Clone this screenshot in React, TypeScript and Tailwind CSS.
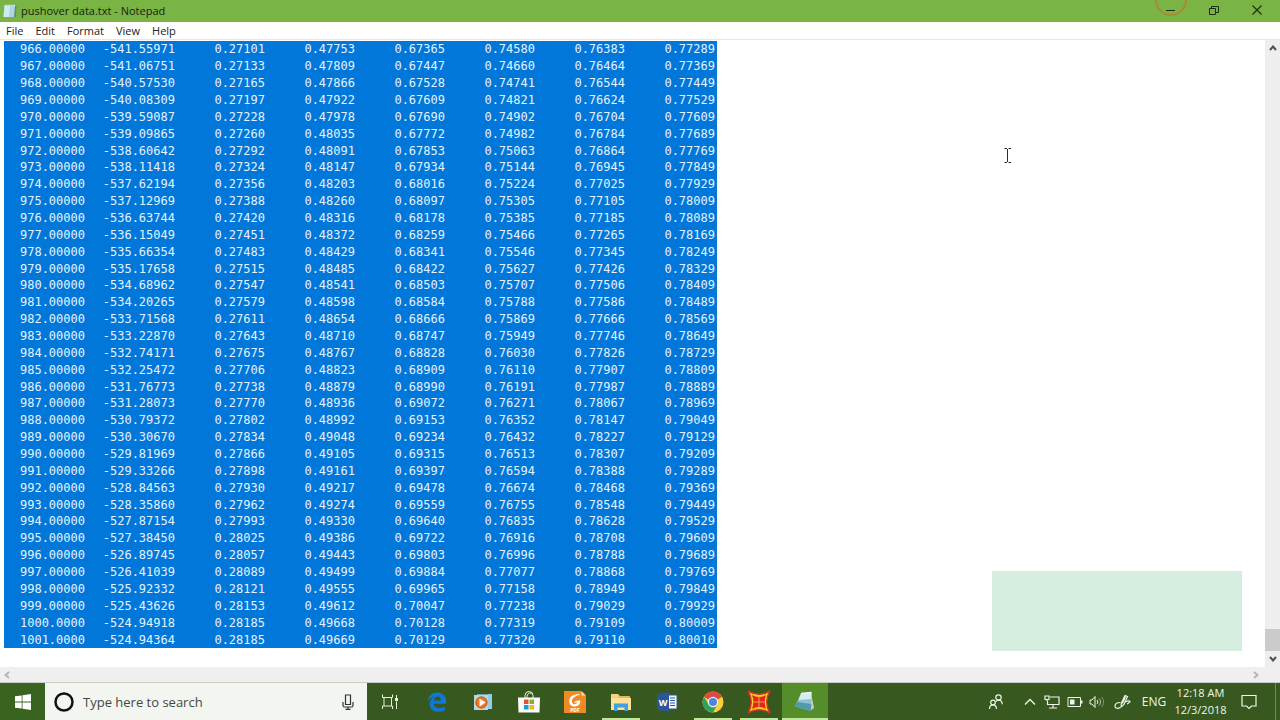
import React from 'react';

const DATA = `
966.00000 -541.55971 0.27101 0.47753 0.67365 0.74580 0.76383 0.77289
967.00000 -541.06751 0.27133 0.47809 0.67447 0.74660 0.76464 0.77369
968.00000 -540.57530 0.27165 0.47866 0.67528 0.74741 0.76544 0.77449
969.00000 -540.08309 0.27197 0.47922 0.67609 0.74821 0.76624 0.77529
970.00000 -539.59087 0.27228 0.47978 0.67690 0.74902 0.76704 0.77609
971.00000 -539.09865 0.27260 0.48035 0.67772 0.74982 0.76784 0.77689
972.00000 -538.60642 0.27292 0.48091 0.67853 0.75063 0.76864 0.77769
973.00000 -538.11418 0.27324 0.48147 0.67934 0.75144 0.76945 0.77849
974.00000 -537.62194 0.27356 0.48203 0.68016 0.75224 0.77025 0.77929
975.00000 -537.12969 0.27388 0.48260 0.68097 0.75305 0.77105 0.78009
976.00000 -536.63744 0.27420 0.48316 0.68178 0.75385 0.77185 0.78089
977.00000 -536.15049 0.27451 0.48372 0.68259 0.75466 0.77265 0.78169
978.00000 -535.66354 0.27483 0.48429 0.68341 0.75546 0.77345 0.78249
979.00000 -535.17658 0.27515 0.48485 0.68422 0.75627 0.77426 0.78329
980.00000 -534.68962 0.27547 0.48541 0.68503 0.75707 0.77506 0.78409
981.00000 -534.20265 0.27579 0.48598 0.68584 0.75788 0.77586 0.78489
982.00000 -533.71568 0.27611 0.48654 0.68666 0.75869 0.77666 0.78569
983.00000 -533.22870 0.27643 0.48710 0.68747 0.75949 0.77746 0.78649
984.00000 -532.74171 0.27675 0.48767 0.68828 0.76030 0.77826 0.78729
985.00000 -532.25472 0.27706 0.48823 0.68909 0.76110 0.77907 0.78809
986.00000 -531.76773 0.27738 0.48879 0.68990 0.76191 0.77987 0.78889
987.00000 -531.28073 0.27770 0.48936 0.69072 0.76271 0.78067 0.78969
988.00000 -530.79372 0.27802 0.48992 0.69153 0.76352 0.78147 0.79049
989.00000 -530.30670 0.27834 0.49048 0.69234 0.76432 0.78227 0.79129
990.00000 -529.81969 0.27866 0.49105 0.69315 0.76513 0.78307 0.79209
991.00000 -529.33266 0.27898 0.49161 0.69397 0.76594 0.78388 0.79289
992.00000 -528.84563 0.27930 0.49217 0.69478 0.76674 0.78468 0.79369
993.00000 -528.35860 0.27962 0.49274 0.69559 0.76755 0.78548 0.79449
994.00000 -527.87154 0.27993 0.49330 0.69640 0.76835 0.78628 0.79529
995.00000 -527.38450 0.28025 0.49386 0.69722 0.76916 0.78708 0.79609
996.00000 -526.89745 0.28057 0.49443 0.69803 0.76996 0.78788 0.79689
997.00000 -526.41039 0.28089 0.49499 0.69884 0.77077 0.78868 0.79769
998.00000 -525.92332 0.28121 0.49555 0.69965 0.77158 0.78949 0.79849
999.00000 -525.43626 0.28153 0.49612 0.70047 0.77238 0.79029 0.79929
1000.0000 -524.94918 0.28185 0.49668 0.70128 0.77319 0.79109 0.80009
1001.0000 -524.94364 0.28185 0.49669 0.70129 0.77320 0.79110 0.80010
`;

const rows = DATA.trim().split('\n').map((line) => line.split(' '));

const menus = ['File', 'Edit', 'Format', 'View', 'Help'];

function NotepadIcon() {
  return (
    <svg viewBox="0 0 22 22" className="h-[22px] w-[22px]" aria-hidden="true">
      <path d="m17 2 3 15-4 3z" fill="#c9cfc4" />
      <path d="M7 2.500 17.500 1.500 17 20 1 15.500z" fill="#8dc3cf" />
      <path d="M7 2.500 17.500 1.500 17.300 8 4.500 9z" fill="#d6ecee" />
      <path d="M3.500 11 17.200 13 17 20 1 15.500z" fill="#4f9aac" />
      <path d="M7 2.500 17.500 1.500" stroke="#f6f6f2" strokeWidth="1.500" />
    </svg>
  );
}

function TitleNotepadIcon() {
  return (
    <svg viewBox="0 0 14 14" className="h-3.5 w-3.5" aria-hidden="true">
      <path d="M4 2h9.500L13 13H3z" fill="#6f837b" />
      <path d="M1.500 2H12l-1 11H.5z" fill="#a9d8e2" />
      <path d="M1.500 2H7l-1 11H.5z" fill="#cdebf0" />
      <path d="M1.500 1.500H12" stroke="#eef6f5" strokeWidth="1.600" strokeDasharray="1 .6" />
    </svg>
  );
}

function TaskViewIcon() {
  return (
    <svg viewBox="0 0 16 16" className="h-4 w-4" fill="none" stroke="#e8f2df" aria-hidden="true">
      <path d="M.5.500v3h10v-3M.5 15v-3h10v3M2 3.500v8.500M9.500 3.500v8.500M14.500 1v3M14.500 7.500V15" />
      <path d="M13 4h3v3h-3z" fill="#e8f2df" stroke="none" />
    </svg>
  );
}

function EdgeIcon() {
  return (
    <svg viewBox="0 0 20 20" className="h-5 w-5" aria-hidden="true">
      <path
        d="M.8 9.200C1.600 3.800 5.200.6 10.300.6c5.600 0 8.900 4 8.900 9.100v2.100H6.800c.1 2.900 2.700 4.200 5.500 4.200 2.100 0 4-.6 5.600-1.600v3.900c-1.900 1-4.100 1.500-6.500 1.500-5.300 0-8.700-3-8.700-7.600 0-3.300 1.900-6.100 5-7.400C4.500 5.400 2.300 6.900.8 9.200zM7 8.400h7c0-2.500-1.300-3.900-3.400-3.900-2 0-3.300 1.400-3.600 3.900z"
        fill="#0f78d4"
      />
    </svg>
  );
}

function MediaPlayerIcon() {
  return (
    <svg viewBox="0 0 20 18" className="h-[18px] w-5" aria-hidden="true">
      <path d="M4 1h15v15H4z" fill="#6fa6c4" />
      <path d="M15 1h4v15h-4z" fill="#8fd0e8" />
      <path d="M1 2h14v15H1z" fill="#b9d6e3" />
      <circle cx="8.500" cy="9.500" r="6" fill="#ee7b22" />
      <circle cx="8.500" cy="9.500" r="5.500" fill="none" stroke="#c9551a" />
      <path d="M6.500 5.500v8l6-4z" fill="#fff" />
    </svg>
  );
}

function StoreIcon() {
  return (
    <svg viewBox="0 0 22 22" className="h-[22px] w-[22px]" aria-hidden="true">
      <path d="M7 8V4.500a4 4 0 0 1 8 0V8M9 8V5.500a3.500 3.500 0 0 1 6-2.500" fill="none" stroke="#e9eee5" />
      <path d="M0 6.500h22l-.5 15H.5z" fill="#fafbf8" />
      <path d="M6 8.500h4.500V13H6z" fill="#e8502b" />
      <path d="M11.500 8.500H16V13h-4.500z" fill="#7cb52a" />
      <path d="M6 14h4.500v4.500H6z" fill="#1a9be0" />
      <path d="M11.500 14H16v4.500h-4.500z" fill="#f5b51b" />
    </svg>
  );
}

function FoxitIcon() {
  return (
    <svg viewBox="0 0 24 24" className="h-6 w-6" aria-hidden="true">
      <path d="M1 1h17l5 5v17H1z" fill="#f08a24" />
      <path d="M18.500 1v4.500H23z" fill="#ffd3a1" />
      <path
        d="M17.500 4.500C12 3.500 6.200 6 6.200 11.200c0 3.600 2.700 5.300 5.700 5.300 3.300 0 5.400-2.200 5.400-5.700-2.600-.6-5 .1-6.300 2.300 1.200-.5 2.100-.7 3.200-.5-.5 1.100-1.400 1.600-2.500 1.600-1.700 0-2.800-1.200-2.800-3C8.900 7.700 13 5.800 17.500 4.500z"
        fill="#fff"
      />
      <text x="12" y="22" textAnchor="middle" fontSize="5" fontWeight="700" fill="#fff" fontFamily="Open Sans, sans-serif">
        PDF
      </text>
    </svg>
  );
}

function ExplorerIcon() {
  return (
    <svg viewBox="0 0 22 20" className="h-5 w-[22px]" aria-hidden="true">
      <path d="M1 2h7l2 2h10v4H1z" fill="#e3b94f" />
      <path d="M1 6h20v12H1z" fill="#fbe19a" />
      <path d="M1 2h7l1 4H1z" fill="#f3d27a" />
      <path d="M4 11.500h14V19h-3.500v-3.500h-7V19H4z" fill="#3fa2dc" />
    </svg>
  );
}

function WordIcon() {
  return (
    <svg viewBox="0 0 22 20" className="h-5 w-[22px]" aria-hidden="true">
      <path d="M11 3h10v14H11z" fill="#f4f6fb" stroke="#2b579a" />
      <path d="M14 6h5M14 8.500h5M14 11h5M14 13.500h5" stroke="#2b579a" />
      <path d="M1 2.500 13 0v20L1 17.500z" fill="#2b579a" />
      <text x="7" y="13.500" textAnchor="middle" fontSize="9" fontWeight="700" fill="#fff" fontFamily="Open Sans, sans-serif">
        W
      </text>
    </svg>
  );
}

function ChromeIcon() {
  return (
    <svg viewBox="0 0 22 22" className="h-[22px] w-[22px]" aria-hidden="true">
      <circle cx="11" cy="11" r="10.500" fill="#f9cf3c" />
      <path d="M11 11 1.900 5.800A10.500 10.500 0 0 1 20.100 5.800z" fill="#dc4b3e" />
      <path d="M1.900 5.800A10.500 10.500 0 0 0 11 21.500L15.300 13.500 11 11 6.700 13.500z" fill="#2fa35a" />
      <circle cx="11" cy="11" r="5.200" fill="#f2f4f2" />
      <circle cx="11" cy="11" r="4" fill="#4a86e8" />
    </svg>
  );
}

function SapIcon() {
  return (
    <svg viewBox="0 0 24 24" className="h-6 w-6" aria-hidden="true">
      <path d="M1 1q11 6.500 22 0-6.500 11 0 22-11-6.500-22 0Q7.500 12 1 1z" fill="#f9d423" stroke="#d0361f" strokeWidth="1.500" />
      <path d="M5 5q7 4 14 0-2.500 7 0 14-7-4-14 0 2.500-7 0-14z" fill="#e3251d" />
      <path d="M12 5.500v13M6 12h12" stroke="#f6a04a" strokeWidth="1" />
    </svg>
  );
}

const apps = [
  { name: 'Microsoft Edge', icon: <EdgeIcon />, open: false },
  { name: 'Windows Media Player', icon: <MediaPlayerIcon />, open: false },
  { name: 'Microsoft Store', icon: <StoreIcon />, open: false },
  { name: 'Foxit PDF', icon: <FoxitIcon />, open: false },
  { name: 'File Explorer', icon: <ExplorerIcon />, open: true },
  { name: 'Word', icon: <WordIcon />, open: false },
  { name: 'Chrome', icon: <ChromeIcon />, open: true },
  { name: 'SAP2000', icon: <SapIcon />, open: true },
];

function TitleBar() {
  return (
    <header className="flex h-[22px] shrink-0 items-center overflow-hidden bg-[#7ab445] pl-[3px]">
      <TitleNotepadIcon />
      <h1 className="ml-1 flex-1 text-[11px] leading-4 text-[#16240c]">pushover data.txt - Notepad</h1>
      <div className="flex h-full pr-0.5 pb-[3px]">
        <button aria-label="Minimize" className="relative flex w-[43px] items-center justify-center">
          {/* click highlight */}
          <span className="absolute -top-4 left-1.5 h-8 w-8 rounded-full border-2 border-[#b9802f]/80" />
          <svg viewBox="0 0 12 12" className="h-3 w-3" stroke="#1c3010" aria-hidden="true">
            <path d="M1 6.500h9" />
          </svg>
        </button>
        <button aria-label="Restore" className="flex w-[43px] items-center justify-center">
          <svg viewBox="0 0 12 12" className="h-3 w-3" fill="none" stroke="#1c3010" aria-hidden="true">
            <path d="M1.500 4.500h6v6h-6zM3.500 4.500v-2h7v6h-3" />
          </svg>
        </button>
        <button aria-label="Close" className="flex w-[43px] items-center justify-center">
          <svg viewBox="0 0 12 12" className="h-3 w-3" stroke="#1c3010" strokeWidth="1.200" aria-hidden="true">
            <path d="m1.500 1.500 9 9M10.500 1.500l-9 9" />
          </svg>
        </button>
      </div>
    </header>
  );
}

function Editor() {
  return (
    <main className="relative flex min-h-0 flex-1">
      <div className="min-w-0 flex-1 pt-px pb-[19px] pl-1">
        <table className="h-full w-[713px] table-fixed border-collapse bg-[#0177d9] font-['DejaVu_Sans_Mono',monospace] text-[12px] leading-4 text-[#e3f3ff]">
          <colgroup>
            <col className="w-[83px]" />
            <col span={7} className="w-[90px]" />
          </colgroup>
          <tbody>
            {rows.map((row) => (
              <tr key={row[0]}>
                {row.map((value, i) => (
                  <td key={i} className="p-0 pr-0.5 text-right align-middle">
                    {value}
                  </td>
                ))}
              </tr>
            ))}
          </tbody>
        </table>
      </div>

      {/* vertical scrollbar */}
      <div className="flex w-[15px] flex-col items-center bg-[#eeeeee]">
        <button aria-label="Scroll up" className="flex h-4 w-full items-center justify-center">
          <svg viewBox="0 0 8 6" className="h-1.5 w-2" fill="none" stroke="#505050" strokeWidth="2" aria-hidden="true">
            <path d="m1 5 3-3.500L7 5" />
          </svg>
        </button>
        <div className="flex-1" />
        <div className="h-[22px] w-full bg-[#cbcbcb]" />
        <button aria-label="Scroll down" className="flex h-4 w-full items-center justify-center">
          <svg viewBox="0 0 8 6" className="h-1.5 w-2" fill="none" stroke="#505050" strokeWidth="2" aria-hidden="true">
            <path d="m1 1 3 3.500L7 1" />
          </svg>
        </button>
      </div>

      {/* empty note floating over the text area */}
      <div className="absolute right-[38px] bottom-4 h-20 w-[250px] bg-[#d5eee0]" />

      {/* text cursor */}
      <svg
        viewBox="0 0 8 16"
        className="absolute top-[108px] left-[1004px] h-4 w-2"
        fill="none"
        stroke="#2a2a2a"
        aria-hidden="true"
      >
        <path d="M.5.5H3m1.500 0H7M.5 14.500H3m1.500 0H7M3.500 1v13" />
      </svg>
    </main>
  );
}

function HorizontalScrollbar() {
  return (
    <div className="flex h-4 shrink-0 items-center justify-between border-b border-[#c9cdc5] bg-[#efefef] pr-[19px] pl-1">
      <button aria-label="Scroll left" className="flex h-full w-2 items-center">
        <svg viewBox="0 0 6 8" className="h-2 w-1.5" fill="none" stroke="#b5b5b5" strokeWidth="2" aria-hidden="true">
          <path d="M5 1 1.500 4 5 7" />
        </svg>
      </button>
      <button aria-label="Scroll right" className="flex h-full w-2 items-center">
        <svg viewBox="0 0 6 8" className="h-2 w-1.5" fill="none" stroke="#b5b5b5" strokeWidth="2" aria-hidden="true">
          <path d="m1 1 3.500 3L1 7" />
        </svg>
      </button>
    </div>
  );
}

function Tray() {
  return (
    <div className="flex text-[#f0f6ea]">
      <button aria-label="People" className="mr-1.5 flex w-[34px] items-center justify-center">
        <svg viewBox="0 0 16 16" className="h-4 w-4" fill="none" stroke="currentColor" strokeWidth="1.200" aria-hidden="true">
          <circle cx="10.500" cy="3.500" r="2.700" />
          <circle cx="5" cy="8.500" r="2.300" />
          <path d="M1.500 15c0-2.500 1.300-4.200 3.500-4.200s3.500 1.700 3.500 4.200M8 7.600c.7-.9 1.500-1.400 2.500-1.400 2.300 0 3.700 1.700 3.700 4" />
        </svg>
      </button>
      <button aria-label="Show hidden icons" className="flex w-[22px] items-center justify-center">
        <svg viewBox="0 0 12 8" className="h-2 w-3" fill="none" stroke="currentColor" strokeWidth="1.300" aria-hidden="true">
          <path d="m1 6.500 5-5 5 5" />
        </svg>
      </button>
      <button aria-label="Network" className="flex w-[22px] items-center justify-center">
        <svg viewBox="0 0 16 14" className="h-3.5 w-4" fill="none" stroke="currentColor" strokeWidth="1.200" aria-hidden="true">
          <path d="M6 2h9v7.500H3.500V6M9 9.500V13M5 13h8" />
          <path d="M1 1h4v3.500H1zM3 4.500V6" />
        </svg>
      </button>
      <button aria-label="Battery" className="flex w-[23px] items-center justify-center">
        <svg viewBox="0 0 16 10" className="h-2.5 w-4" aria-hidden="true">
          <path d="M1 .5h12.500v9H1z" fill="none" stroke="currentColor" />
          <path d="M3 2.500h4.500v5H3zM14 3.500h1.500v3H14z" fill="currentColor" />
        </svg>
      </button>
      <button aria-label="Volume" className="flex w-[22px] items-center justify-center">
        <svg viewBox="0 0 16 14" className="h-3.5 w-4" fill="none" stroke="currentColor" aria-hidden="true">
          <path d="M1 5h2l3-3.500v11L3 9H1zM8 5c1 1 1 3 0 4" />
          <path d="M10 3.500c2 2 2 5 0 7" opacity=".7" />
          <path d="M12.500 2c2.800 3 2.800 7 0 10" opacity=".4" />
        </svg>
      </button>
      <button aria-label="Windows Ink" className="flex w-[30px] items-center justify-center">
        <svg viewBox="0 0 18 16" className="h-4 w-[18px]" fill="none" stroke="currentColor" strokeWidth="1.200" aria-hidden="true">
          <path d="m7 13 .5-4L11 1.500l2.500 1L10 10.500zM8.500 9.500l3-7" />
          <path d="M6.500 8.500C3 8.500 1 10 1 12.200c0 2.300 3 2.800 5 1.300M11.500 8c1.500-1.300 4-1.500 4.500-.5.400.9-2 1-2.600 2.700" />
        </svg>
      </button>
      <button className="flex w-8 items-center justify-center text-[12px] leading-4">ENG</button>
      <button className="flex w-[61px] flex-col items-center justify-center pb-0.5 text-[11px] leading-[17px] whitespace-nowrap">
        <span>12:18 AM</span>
        <span>12/3/2018</span>
      </button>
      <button aria-label="Notifications" className="mr-2 flex w-9 items-center justify-center">
        <svg viewBox="0 0 16 16" className="h-4 w-4" fill="none" stroke="currentColor" strokeWidth="1.200" aria-hidden="true">
          <path d="M1 1.500h14v10.500h-4.500L8 14.500 5.500 12H1z" />
        </svg>
      </button>
      <button aria-label="Show desktop" className="w-[5px] border-l border-[#6f8f5a]" />
    </div>
  );
}

function Taskbar() {
  return (
    <footer className="flex h-[37px] shrink-0 bg-[#37591f]">
      <button aria-label="Start" className="flex w-[45px] items-center justify-center bg-[#3a631f]">
        <svg viewBox="0 0 16 16" className="h-4 w-4" fill="#fff" aria-hidden="true">
          <path d="M0 2.300 6.700 1.400v6.200H0zM7.500 1.300 16 0v7.600H7.500zM0 8.400h6.700v6.200L0 13.700zM7.500 8.400H16V16l-8.500-1.300z" />
        </svg>
      </button>

      <label className="flex w-[322px] items-center bg-[#f3f5f0] pr-3 pl-[9px]">
        <svg viewBox="0 0 20 20" className="h-5 w-5" aria-hidden="true">
          <circle cx="10" cy="10" r="8.500" fill="none" stroke="#111" strokeWidth="2.500" />
        </svg>
        <input
          type="text"
          aria-label="Search"
          placeholder="Type here to search"
          className="ml-[9px] min-w-0 flex-1 bg-transparent text-[13px] leading-5 outline-none placeholder:text-[#454742]"
        />
        <svg viewBox="0 0 14 16" className="h-4 w-3.5" fill="none" stroke="#333" strokeWidth="1.200" aria-hidden="true">
          <path d="M4.500 1h5v9.500h-5zM2 8v3.500c0 1 .7 1.500 1.500 1.500h7c.8 0 1.500-.5 1.500-1.500V8M7 13v2.500M4.500 15.400h5" />
        </svg>
      </label>

      <nav className="flex flex-1">
        <button aria-label="Task view" className="mr-px flex w-[46px] items-center justify-center">
          <TaskViewIcon />
        </button>
        {apps.map((app) => (
          <button key={app.name} aria-label={app.name} className="relative flex w-[46px] items-center justify-center">
            {app.icon}
            {app.open && <span className="absolute inset-x-1 bottom-0 h-0.5 bg-[#bfe89a]" />}
          </button>
        ))}
        <button aria-label="Notepad" className="relative flex w-[46px] items-center justify-center bg-[#558d2b]">
          <NotepadIcon />
          <span className="absolute inset-x-0 bottom-0 h-0.5 bg-[#bfe89a]" />
        </button>
      </nav>

      <Tray />
    </footer>
  );
}

export default function App() {
  return (
    <div className="flex h-screen flex-col overflow-hidden bg-white font-['Open_Sans','Noto_Sans',sans-serif]">
      <TitleBar />
      <nav className="flex h-[18px] shrink-0 items-center gap-3 border-b border-[#e4e6e8] pl-1.5 text-[11px] leading-4 text-[#222]">
        {menus.map((menu) => (
          <button key={menu}>{menu}</button>
        ))}
      </nav>
      <Editor />
      <HorizontalScrollbar />
      <Taskbar />
    </div>
  );
}
